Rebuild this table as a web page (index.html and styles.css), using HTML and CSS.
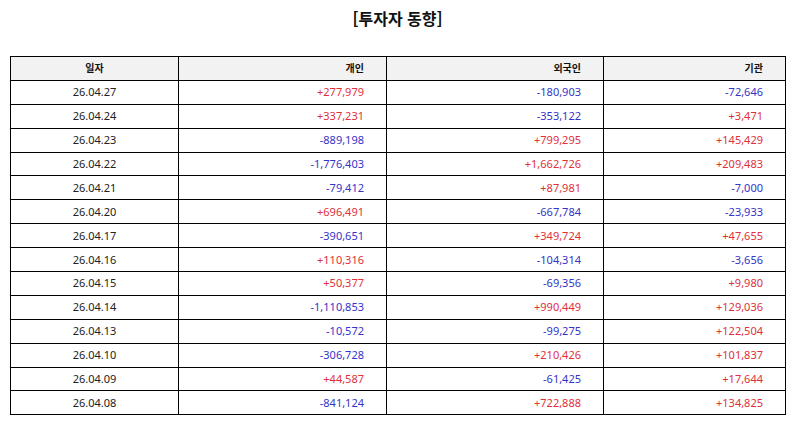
FILE: index.html
```html
<!DOCTYPE html>
<html lang="ko">
<head>
<meta charset="utf-8">
<link rel="stylesheet" href="styles.css">
</head>
<body>
<div class="page">
  <h1 class="title">[투자자 동향]</h1>
  <table class="grid">
    <colgroup>
      <col class="c1"><col class="c2"><col class="c3"><col class="c4">
    </colgroup>
    <thead>
      <tr><th class="date">일자</th><th>개인</th><th>외국인</th><th>기관</th></tr>
    </thead>
    <tbody>
      <tr><td class="date">26.04.27</td><td class="up">+277,979</td><td class="dn">-180,903</td><td class="dn">-72,646</td></tr>
      <tr><td class="date">26.04.24</td><td class="up">+337,231</td><td class="dn">-353,122</td><td class="up">+3,471</td></tr>
      <tr><td class="date">26.04.23</td><td class="dn">-889,198</td><td class="up">+799,295</td><td class="up">+145,429</td></tr>
      <tr><td class="date">26.04.22</td><td class="dn">-1,776,403</td><td class="up">+1,662,726</td><td class="up">+209,483</td></tr>
      <tr><td class="date">26.04.21</td><td class="dn">-79,412</td><td class="up">+87,981</td><td class="dn">-7,000</td></tr>
      <tr><td class="date">26.04.20</td><td class="up">+696,491</td><td class="dn">-667,784</td><td class="dn">-23,933</td></tr>
      <tr><td class="date">26.04.17</td><td class="dn">-390,651</td><td class="up">+349,724</td><td class="up">+47,655</td></tr>
      <tr><td class="date">26.04.16</td><td class="up">+110,316</td><td class="dn">-104,314</td><td class="dn">-3,656</td></tr>
      <tr><td class="date">26.04.15</td><td class="up">+50,377</td><td class="dn">-69,356</td><td class="up">+9,980</td></tr>
      <tr><td class="date">26.04.14</td><td class="dn">-1,110,853</td><td class="up">+990,449</td><td class="up">+129,036</td></tr>
      <tr><td class="date">26.04.13</td><td class="dn">-10,572</td><td class="dn">-99,275</td><td class="up">+122,504</td></tr>
      <tr><td class="date">26.04.10</td><td class="dn">-306,728</td><td class="up">+210,426</td><td class="up">+101,837</td></tr>
      <tr><td class="date">26.04.09</td><td class="up">+44,587</td><td class="dn">-61,425</td><td class="up">+17,644</td></tr>
      <tr><td class="date">26.04.08</td><td class="dn">-841,124</td><td class="up">+722,888</td><td class="up">+134,825</td></tr>
    </tbody>
  </table>
</div>
</body>
</html>
```
FILE: styles.css
```css
html, body {
  margin: 0;
  padding: 0;
  background: #ffffff;
}
.page {
  padding: 0 9px 0 10px;
  font-family: "Noto Sans", "Noto Sans CJK KR", sans-serif;
  color: #222222;
}
.title {
  margin: 0;
  padding-top: 6px;
  height: 56px;
  box-sizing: border-box;
  text-align: center;
  font-family: "Noto Sans CJK KR", sans-serif;
  font-size: 16px;
  font-weight: 700;
  color: #111111;
  line-height: 24px;
}
.grid {
  width: 775px;
  border-collapse: collapse;
  table-layout: fixed;
  font-size: 11px;
}
.c1 { width: 168px; }
.c2 { width: 208px; }
.c3 { width: 217px; }
.c4 { width: 182px; }
.grid th, .grid td {
  border: 1px solid #000000;
  height: 22.9px;
  padding: 0 22px 0 0;
  text-align: right;
  line-height: 14px;
}
.grid th {
  background: #f2f2f2;
  font-family: "Noto Sans CJK KR", sans-serif;
  font-weight: 700;
  font-size: 10px;
  color: #111111;
}
.grid .date {
  text-align: center;
  padding: 0;
}
.up { color: #e0303a; }
.dn { color: #3434c8; }
```
